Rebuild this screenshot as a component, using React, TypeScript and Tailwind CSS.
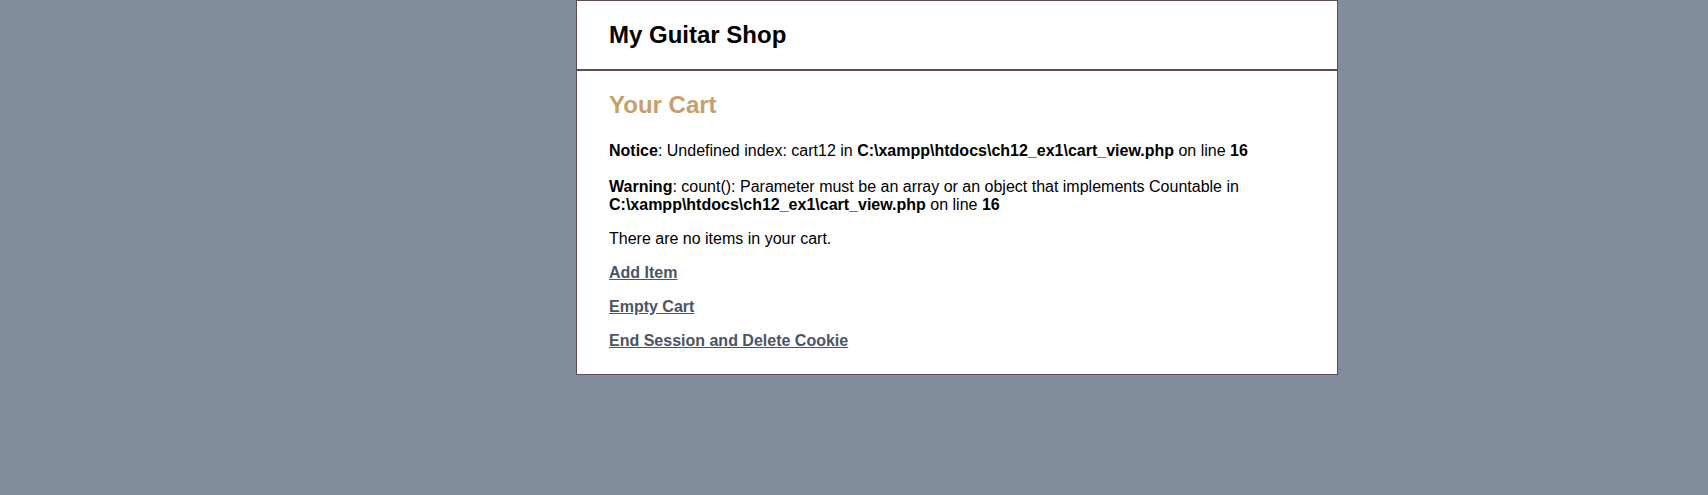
import React from 'react';

export default function App() {
  return (
    <div className="min-h-[495px] w-full bg-[#818c9d] font-['Liberation_Sans',Arial,sans-serif] text-black">
      <div className="ml-[576px] w-[762px] border border-[#5e4b53] bg-white">
        <header className="flex h-[70px] items-center border-b-2 border-[#5e4b53] px-8">
          <h1 className="text-[24px] font-bold leading-[28px]">My Guitar Shop</h1>
        </header>

        <main className="px-8 pt-[20px] pb-[24px] text-[16px] leading-[18px]">
          <h1 className="text-[24px] font-bold leading-[28px] text-[#c89f6c]">Your Cart</h1>

          <div className="mt-[23px]">
            <b>Notice</b>: Undefined index: cart12 in <b>C:\xampp\htdocs\ch12_ex1\cart_view.php</b> on line <b>16</b>
          </div>
          <div className="mt-[18px]">
            <b>Warning</b>: count(): Parameter must be an array or an object that implements Countable in{' '}
            <b>C:\xampp\htdocs\ch12_ex1\cart_view.php</b> on line <b>16</b>
          </div>

          <p className="mt-[16px]">There are no items in your cart.</p>

          <p className="mt-4">
            <a href="#" className="font-bold text-[#4a5466] underline">Add Item</a>
          </p>
          <p className="mt-4">
            <a href="#" className="font-bold text-[#4a5466] underline">Empty Cart</a>
          </p>
          <p className="mt-4">
            <a href="#" className="font-bold text-[#4a5466] underline">End Session and Delete Cookie</a>
          </p>
        </main>
      </div>
    </div>
  );
}
